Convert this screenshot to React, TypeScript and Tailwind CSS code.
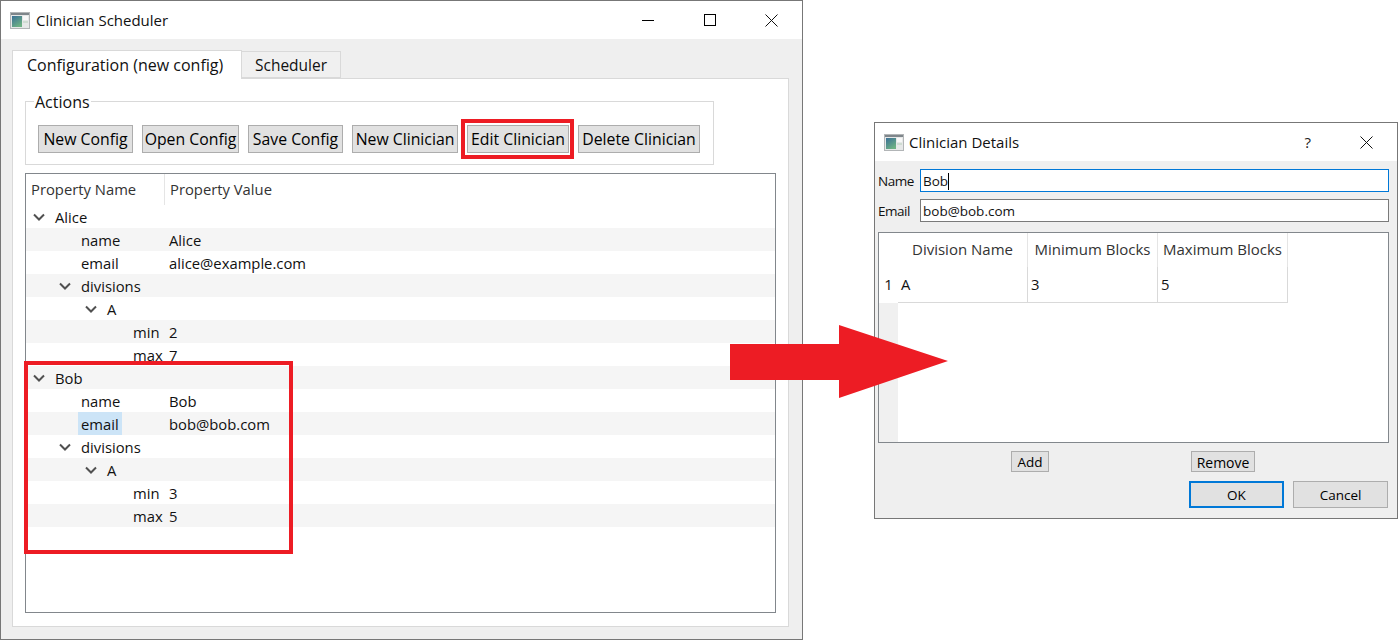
import type { ReactNode } from 'react';

type TreeRow = {
  indent: string;
  label: string;
  value?: string;
  expanded?: boolean;
  selected?: boolean;
};

const rows: TreeRow[] = [
  { indent: 'pl-[7px]', label: 'Alice', expanded: true },
  { indent: 'pl-[55px]', label: 'name', value: 'Alice' },
  { indent: 'pl-[55px]', label: 'email', value: 'alice@example.com' },
  { indent: 'pl-[33px]', label: 'divisions', expanded: true },
  { indent: 'pl-[59px]', label: 'A', expanded: true },
  { indent: 'pl-[107px]', label: 'min', value: '2' },
  { indent: 'pl-[107px]', label: 'max', value: '7' },
  { indent: 'pl-[7px]', label: 'Bob', expanded: true },
  { indent: 'pl-[55px]', label: 'name', value: 'Bob' },
  { indent: 'pl-[55px]', label: 'email', value: 'bob@bob.com', selected: true },
  { indent: 'pl-[33px]', label: 'divisions', expanded: true },
  { indent: 'pl-[59px]', label: 'A', expanded: true },
  { indent: 'pl-[107px]', label: 'min', value: '3' },
  { indent: 'pl-[107px]', label: 'max', value: '5' },
];

const actions = [
  { label: 'New Config', width: 'w-[95px]' },
  { label: 'Open Config', width: 'w-[97px]' },
  { label: 'Save Config', width: 'w-[95px]' },
  { label: 'New Clinician', width: 'w-[106px]' },
  { label: 'Edit Clinician', width: 'w-[102px]' },
  { label: 'Delete Clinician', width: 'w-[122px]' },
];

function AppIcon() {
  return (
    <svg width="20" height="17" viewBox="0 0 20 17" className="shrink-0">
      <defs>
        <linearGradient id="appIconFill" x1="0" y1="0" x2="0.6" y2="1">
          <stop offset="0" stopColor="#3a6f96" />
          <stop offset="1" stopColor="#6db184" />
        </linearGradient>
      </defs>
      <rect x="0.5" y="0.5" width="19" height="16" fill="#e6e8e8" stroke="#b2b5b7" />
      <rect x="1" y="1" width="18" height="2" fill="#7f868b" />
      <rect x="2" y="4" width="10" height="11" fill="url(#appIconFill)" />
      <rect x="13" y="4" width="5" height="4" fill="#f8f8f8" />
      <rect x="13" y="9" width="5" height="2" fill="#cfdcd2" />
    </svg>
  );
}

function Chevron() {
  return (
    <svg width="12" height="8" viewBox="0 0 12 8" className="mr-[10px] shrink-0">
      <path d="M1 1.5 6 6.5 11 1.5" fill="none" stroke="#505050" strokeWidth="2" />
    </svg>
  );
}

function CloseIcon() {
  return (
    <svg width="13" height="13" viewBox="0 0 13 13">
      <path d="M.5.5l12 12M12.5.5l-12 12" fill="none" stroke="#111" strokeWidth="1" />
    </svg>
  );
}

function TitleBar({ title, titleClass, children }: { title: string; titleClass: string; children: ReactNode }) {
  return (
    <div className="flex h-[38px] shrink-0 items-center bg-white pl-[9px]">
      <AppIcon />
      <span className={`flex-1 text-[15px] text-[#111] ${titleClass}`}>{title}</span>
      {children}
    </div>
  );
}

function Button({ children, className }: { children: ReactNode; className: string }) {
  return (
    <button type="button" className={`flex items-center justify-center bg-[#e1e1e1] text-black ${className}`}>
      {children}
    </button>
  );
}

function TreeLine({ row, index }: { row: TreeRow; index: number }) {
  return (
    <div className={`flex h-[23px] items-center text-[14.8px] text-[#111] ${index % 2 === 1 ? 'bg-[#f5f5f5]' : 'bg-white'}`}>
      <div className={`flex h-full w-[143px] shrink-0 items-center ${row.indent}`}>
        {row.expanded && <Chevron />}
        {row.selected ? (
          <span className="-ml-[3px] flex h-full items-center bg-[#cce4f7] px-[3px] pt-px">{row.label}</span>
        ) : (
          <span className="pt-[2px]">{row.label}</span>
        )}
      </div>
      {row.value && <span className="pt-[2px]">{row.value}</span>}
    </div>
  );
}

function MainWindow() {
  return (
    <div className="flex h-[640px] w-[803px] shrink-0 flex-col border border-[#777] bg-[#efefef]">
      <TitleBar title="Clinician Scheduler" titleClass="ml-[6px]">
        <div className="flex items-center">
          <div className="h-px w-[12px] bg-black" />
          <div className="ml-[50px] h-[12px] w-[12px] border border-black" />
          <div className="mr-[24px] ml-[49px]">
            <CloseIcon />
          </div>
        </div>
      </TitleBar>

      <div className="flex items-end pt-[11px] pl-[11px]">
        <div className="relative z-10 -mb-px flex h-[29px] w-[230px] items-center border border-b-0 border-[#d9d9d9] bg-white pl-[14px] text-[16px] text-[#111]">
          Configuration (new config)
        </div>
        <div className="flex h-[27px] w-[99px] items-center justify-center border border-l-0 border-[#d9d9d9] bg-[#f0f0f0] pt-[2px] text-[15.5px] text-[#111]">
          Scheduler
        </div>
      </div>

      <div className="mr-[13px] ml-[11px] flex h-[549px] flex-col border border-[#d9d9d9] bg-white pt-[22px] pl-[12px]">
        <div className="relative flex h-[64px] w-[689px] shrink-0 items-center gap-[9px] border border-[#d9d9d9] pl-[12px]">
          <span className="absolute -top-[9px] left-[8px] bg-white px-px text-[16px] leading-[18px] text-[#111]">Actions</span>
          {actions.map((action) => (
            <Button key={action.label} className={`mt-[12px] h-[28px] border border-[#adadad] pt-[2px] text-[15.8px] ${action.width}`}>
              {action.label}
            </Button>
          ))}
        </div>

        <div className="mt-[8px] h-[440px] w-[751px] border border-[#82878c] bg-white">
          <div className="flex h-[31px] text-[14.8px] text-[#333]">
            <div className="flex w-[139px] items-center border-r border-[#e5e5e5] pl-[5px]">Property Name</div>
            <div className="flex items-center pl-[5px]">Property Value</div>
          </div>
          {rows.map((row, index) => (
            <TreeLine key={`${row.label}-${index}`} row={row} index={index} />
          ))}
        </div>
      </div>
    </div>
  );
}

function DetailsDialog() {
  return (
    <div className="mt-[122px] ml-[71px] flex h-[397px] w-[524px] shrink-0 flex-col border border-[#777] bg-[#efefef]">
      <TitleBar title="Clinician Details" titleClass="ml-[5px]">
        <span className="text-[15px] text-[#222]">?</span>
        <div className="mr-[24px] ml-[49px]">
          <CloseIcon />
        </div>
      </TitleBar>

      <div className="flex flex-col gap-[7px] pt-[8px] pr-[8px] pl-[3px]">
        <div className="flex items-center">
          <span className="w-[42px] pt-px text-[13.5px] tracking-[-0.5px] text-[#111]">Name</span>
          <div className="flex h-[23px] flex-1 items-center border border-[#0078d7] bg-white pt-px pl-[2px] text-[13.5px] text-[#111]">
            Bob<span className="h-[17px] w-px bg-black" />
          </div>
        </div>
        <div className="flex items-center">
          <span className="w-[42px] pt-px text-[13.5px] tracking-[-0.5px] text-[#111]">Email</span>
          <div className="flex h-[23px] flex-1 items-center border border-[#7a7a7a] bg-white pt-px pl-[2px] text-[13.5px] text-[#111]">
            bob@bob.com
          </div>
        </div>
      </div>

      <div className="mt-[10px] mr-[8px] ml-[3px] flex h-[211px] border border-[#82878c] bg-white">
        <div className="flex w-[19px] shrink-0 flex-col bg-[#f0f0f0]">
          <div className="h-[34px] bg-white" />
          <div className="flex h-[36px] items-center justify-center bg-white pb-px text-[14.8px] text-[#111]">1</div>
          <div className="flex-1" />
        </div>
        <div className="grid h-[70px] grid-cols-[130px_130px_130px] grid-rows-[34px_36px] text-[15px] text-[#333]">
          <div className="flex items-center justify-center border-r border-[#e5e5e5] pb-[2px]">Division Name</div>
          <div className="flex items-center justify-center border-r border-[#e5e5e5] pb-[2px]">Minimum Blocks</div>
          <div className="flex items-center justify-center border-r border-[#e5e5e5] pb-[2px]">Maximum Blocks</div>
          <div className="flex items-center border-r border-b border-[#d9d9d9] pl-[3px] text-[14.8px] text-[#111]">A</div>
          <div className="flex items-center border-r border-b border-[#d9d9d9] pl-[3px] text-[14.8px] text-[#111]">3</div>
          <div className="flex items-center border-r border-b border-[#d9d9d9] pl-[3px] text-[14.8px] text-[#111]">5</div>
        </div>
      </div>

      <div className="mt-[8px] flex pl-[136px]">
        <Button className="h-[21px] w-[38px] border border-[#adadad] pt-px text-[13.5px]">Add</Button>
        <Button className="ml-[142px] h-[21px] w-[64px] border border-[#adadad] pt-px text-[14px]">Remove</Button>
      </div>

      <div className="mt-[9px] flex justify-end gap-[9px] pr-[9px]">
        <Button className="h-[27px] w-[95px] border-2 border-[#0078d7] pt-px text-[13.5px]">OK</Button>
        <Button className="h-[27px] w-[95px] border border-[#adadad] pt-px text-[13.5px]">Cancel</Button>
      </div>
    </div>
  );
}

export default function App() {
  return (
    <div className="relative flex h-[640px] w-[1398px] overflow-hidden bg-white font-['Open_Sans','Noto_Sans',sans-serif]">
      <MainWindow />
      <DetailsDialog />

      {/* annotations on top of the screenshot */}
      <div className="pointer-events-none absolute top-[119px] left-[461px] h-[40px] w-[113px] border-[4px] border-[#ed1c24]" />
      <div className="pointer-events-none absolute top-[361px] left-[24px] h-[193px] w-[269px] border-[4px] border-[#ed1c24]" />
      <svg className="pointer-events-none absolute top-[325px] left-[730px]" width="218" height="73" viewBox="0 0 218 73">
        <polygon points="0,19 109,19 109,0 218,36 109,73 109,55 0,55" fill="#ed1c24" />
      </svg>
    </div>
  );
}
